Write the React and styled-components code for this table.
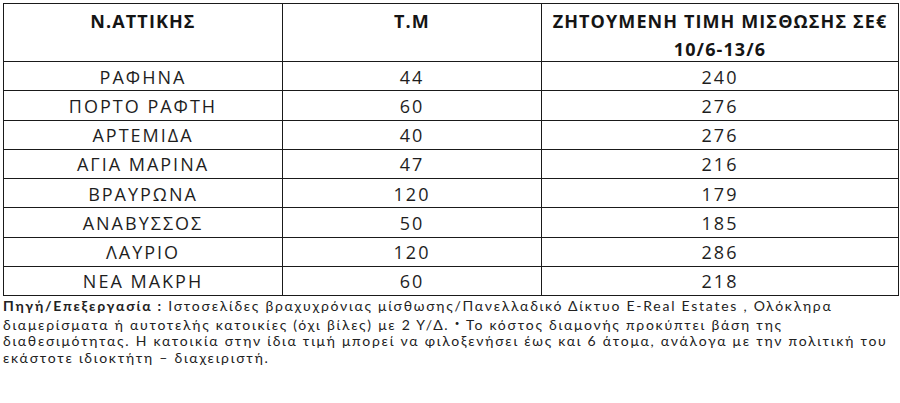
import React from 'react';
import styled, { createGlobalStyle } from 'styled-components';

const rows = [
    { area: 'ΡΑΦΗΝΑ', size: '44', price: '240' },
    { area: 'ΠΟΡΤΟ ΡΑΦΤΗ', size: '60', price: '276' },
    { area: 'ΑΡΤΕΜΙΔΑ', size: '40', price: '276' },
    { area: 'ΑΓΙΑ ΜΑΡΙΝΑ', size: '47', price: '216' },
    { area: 'ΒΡΑΥΡΩΝΑ', size: '120', price: '179' },
    { area: 'ΑΝΑΒΥΣΣΟΣ', size: '50', price: '185' },
    { area: 'ΛΑΥΡΙΟ', size: '120', price: '286' },
    { area: 'ΝΕΑ ΜΑΚΡΗ', size: '60', price: '218' },
];

const App = () => {
    return (
        <>
            <GlobalStyle />
            <Wrapper>
                <Table>
                    <HeadCell>N.ATTIKHΣ</HeadCell>
                    <HeadCell>T.M</HeadCell>
                    <HeadCell>ZHTOYMENH TIMH ΜΙΣΘΩΣΗΣ ΣΕ€<br />10/6-13/6</HeadCell>
                    {rows.map((row) => (
                        <React.Fragment key={row.area}>
                            <Cell>{row.area}</Cell>
                            <Cell>{row.size}</Cell>
                            <Cell>{row.price}</Cell>
                        </React.Fragment>
                    ))}
                </Table>
                <Note>
                    <Strong>Πηγή/Επεξεργασία :</Strong> Ιστοσελίδες βραχυχρόνιας μίσθωσης/Πανελλαδικό Δίκτυο E-Real Estates , Ολόκληρα<br />
                    διαμερίσματα ή αυτοτελής κατοικίες (όχι βίλες) με 2 Υ/Δ. <Mark>•</Mark> Το κόστος διαμονής προκύπτει βάση της<br />
                    διαθεσιμότητας. Η κατοικία στην ίδια τιμή μπορεί να φιλοξενήσει έως και 6 άτομα, ανάλογα με την πολιτική του<br />
                    εκάστοτε ιδιοκτήτη – διαχειριστή.
                </Note>
            </Wrapper>
        </>
    )
}

export default App

const GlobalStyle = createGlobalStyle`
    body {
        margin: 0;
        background: #ffffff;
        font-family: 'Open Sans', 'Noto Sans', sans-serif;
        color: #1c1c1c;
    }
`

const Wrapper = styled.div`
    padding: 3px 0 0 3px;
    width: 896px;
`

const Table = styled.div`
    display: grid;
    grid-template-columns: 278px 258px 356px;
    grid-template-rows: 57px repeat(8, 28.25px);
    gap: 1px;
    padding: 1px;
    background: #1a1a1a;
`

const Cell = styled.div`
    background: #ffffff;
    display: flex;
    align-items: center;
    justify-content: center;
    padding-top: 1px;
    font-size: 18px;
    letter-spacing: 2px;
    color: #1e1e1e;
`

const HeadCell = styled.div`
    background: #ffffff;
    text-align: center;
    padding-top: 3px;
    font-size: 18px;
    line-height: 28px;
    font-weight: 700;
    letter-spacing: 1.1px;
    color: #151515;
`

const Note = styled.p`
    margin: 0;
    padding-top: 2px;
    font-family: 'Lato', 'Open Sans', sans-serif;
    font-size: 14px;
    line-height: 16.5px;
    color: #222222;
    letter-spacing: 1.75px;
`

const Strong = styled.b`
    font-weight: 700;
`

const Mark = styled.span`
    font-size: 8px;
    vertical-align: 4px;
`
